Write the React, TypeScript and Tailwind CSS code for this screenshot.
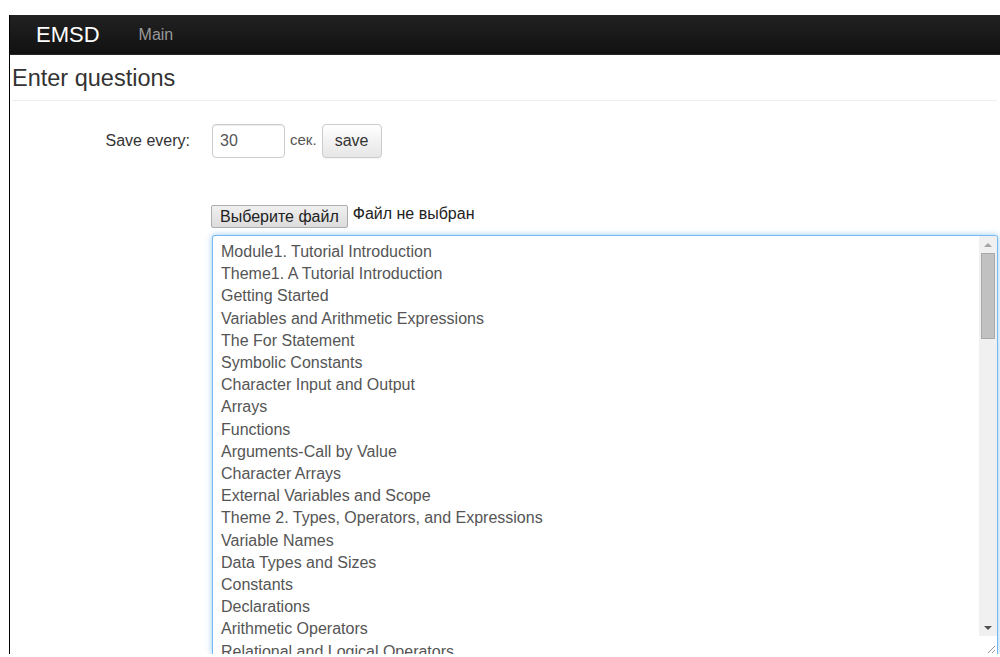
import React, { useState } from 'react';

const topics = [
  'Module1. Tutorial Introduction',
  'Theme1. A Tutorial Introduction',
  'Getting Started',
  'Variables and Arithmetic Expressions',
  'The For Statement',
  'Symbolic Constants',
  'Character Input and Output',
  'Arrays',
  'Functions',
  'Arguments-Call by Value',
  'Character Arrays',
  'External Variables and Scope',
  'Theme 2. Types, Operators, and Expressions',
  'Variable Names',
  'Data Types and Sizes',
  'Constants',
  'Declarations',
  'Arithmetic Operators',
  'Relational and Logical Operators',
];

function Navbar() {
  return (
    <div className="h-[40px] flex items-center bg-gradient-to-b from-[#222] to-[#111] border-b border-[#252525]">
      <span className="ml-[26px] text-[22px] text-white leading-none">EMSD</span>
      <span className="ml-[39px] text-[16px] text-[#999] leading-none">Main</span>
    </div>
  );
}

// fake classic scrollbar for the questions box
function Scrollbar() {
  return (
    <div className="w-[18px] flex flex-col bg-[#f0f0f0]">
      <div className="h-[17px] flex items-center justify-center">
        <div className="w-0 h-0 border-x-[4px] border-x-transparent border-b-[4px] border-b-[#a3a3a3]" />
      </div>
      <div className="mx-[2px] h-[86px] bg-[#c1c1c1] border border-[#a8a8a8]" />
      <div className="flex-1" />
      <div className="h-[17px] flex items-center justify-center">
        <div className="w-0 h-0 border-x-[4px] border-x-transparent border-t-[4px] border-t-[#505050]" />
      </div>
      <div className="h-[19px] bg-white relative">
        <svg className="absolute right-[1px] bottom-[1px]" width="10" height="10" viewBox="0 0 10 10">
          <path d="M9 2 L2 9 M9 6 L6 9" stroke="#999" strokeWidth="1" />
        </svg>
      </div>
    </div>
  );
}

export default function App() {
  const [seconds, setSeconds] = useState('30');

  return (
    <div className="min-h-screen bg-white pt-[15px] pl-[9px] font-['Liberation_Sans',Arial,sans-serif]">
      <div className="h-[639px] border-l border-black overflow-hidden">
        <Navbar />
        <h1 className="mt-[8px] ml-[2px] text-[23.5px] leading-[30px] text-[#333]">Enter questions</h1>
        <div className="mt-[7px] ml-[2px] mr-[3px] border-t border-[#eee]" />

        <div className="mt-[23px] flex items-center">
          <label className="w-[180px] text-right text-[16px] text-[#333]">Save every:</label>
          <input
            value={seconds}
            onChange={e => setSeconds(e.target.value)}
            className="ml-[22px] w-[73px] h-[34px] px-[7px] text-[16px] text-[#555] border border-[#ccc] rounded-[4px] shadow-[inset_0_1px_1px_rgba(0,0,0,0.075)] outline-none"
          />
          <span className="ml-[5px] text-[15px] text-[#555] -mt-[2px]">сек.</span>
          <button className="ml-[5px] w-[60px] h-[34px] text-[16px] text-[#333] border border-[#ccc] rounded-[4px] bg-gradient-to-b from-white to-[#e6e6e6] shadow-[0_1px_1px_rgba(0,0,0,0.05)]">
            save
          </button>
        </div>

        <div className="mt-[47px] ml-[201px] flex items-start">
          <button className="h-[23px] px-[8px] text-[16px] leading-none text-[#222] border border-[#adadad] rounded-[2px] bg-gradient-to-b from-[#f0f0f0] to-[#dcdcdc]">
            Выберите файл
          </button>
          <span className="ml-[5px] text-[16px] text-[#222] leading-[18px]">Файл не выбран</span>
        </div>

        <div className="mt-[7px] ml-[202px] w-[786px] h-[421px] flex border border-[rgba(82,168,236,0.8)] rounded-[3px] shadow-[0_0_6px_rgba(82,168,236,0.6)] bg-white overflow-hidden">
          <div className="flex-1 pl-[8px] pt-[5px] overflow-hidden">
            {topics.map(t => (
              <div key={t} className="text-[16px] leading-[22.2px] text-[#555] whitespace-nowrap">{t}</div>
            ))}
          </div>
          <Scrollbar />
        </div>
      </div>
    </div>
  );
}
